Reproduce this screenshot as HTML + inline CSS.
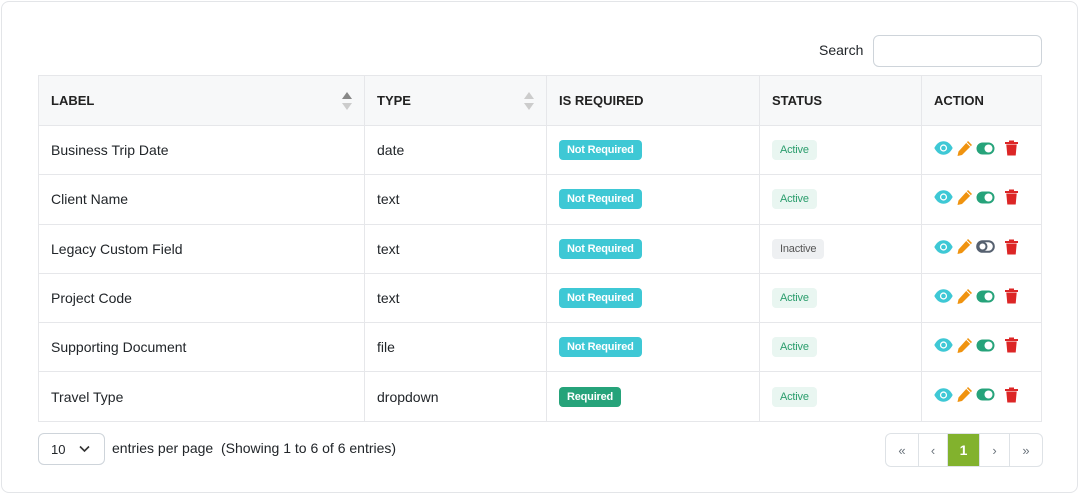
<!DOCTYPE html>
<html><head><style>
*{box-sizing:border-box;margin:0;padding:0}
body{width:1080px;height:495px;background:#fff;font-family:"Liberation Sans",sans-serif;color:#212529;position:relative;overflow:hidden}
.card{position:absolute;left:1px;top:1px;width:1077px;height:492px;border:1px solid #e3e5e8;border-radius:8px}
.search{position:absolute;left:819px;top:42px;font-size:14px}
.sinput{position:absolute;left:873px;top:35px;width:169px;height:32px;border:1px solid #ced4da;border-radius:6px}
table{position:absolute;left:38px;top:75px;border-collapse:collapse;width:1004px;font-size:14px}
td,th{border:1px solid #e6e7ea;padding:0 12px;text-align:left;vertical-align:middle}
th{height:50px;background:#f7f8f9;font-size:13px;font-weight:bold;color:#222;position:relative}
td{height:49.3px}
.sort{position:absolute;right:14px;top:16px;width:8px;height:18px}
.sort:before,.sort:after{content:"";position:absolute;left:0;border-left:5px solid transparent;border-right:5px solid transparent}
.sort:before{top:0;border-bottom:7px solid #ccc}
.sort:after{bottom:0;border-top:7px solid #ccc}
.sort.a:before{border-bottom-color:#888}
.b{display:inline-block;font-size:11px;font-weight:bold;padding:3px 8px;border-radius:4px;line-height:14px;letter-spacing:-0.2px}
.nr{background:#3ec8d5;color:#fff}
.rq{background:#26a37a;color:#fff}
.ac{background:#e9f6f1;color:#2a9d6c;font-weight:normal}
.in{background:#eef0f2;color:#555;font-weight:normal}
.ic{display:inline-flex;align-items:center;gap:3px;margin-top:-4px}
.pg{position:absolute;left:885px;top:433px;height:34px;display:flex;border:1px solid #dee2e6;border-radius:6px;overflow:hidden;font-size:13px;color:#6c757d}
.pg div{display:flex;align-items:center;justify-content:center;border-right:1px solid #dee2e6}
.pg div:last-child{border-right:none}
</style></head><body>
<div class="card"></div>
<div class="search">Search</div><div class="sinput"></div>
<table>
<tr><th style="width:326px">LABEL<span class="sort a"></span></th><th style="width:182px">TYPE<span class="sort"></span></th><th style="width:213px">IS REQUIRED</th><th style="width:162px">STATUS</th><th>ACTION</th></tr>
<tr><td>Business Trip Date</td><td>date</td><td><span class="b nr">Not Required</span></td><td><span class="b ac">Active</span></td><td><span class="ic">I1</span></td></tr>
<tr><td>Client Name</td><td>text</td><td><span class="b nr">Not Required</span></td><td><span class="b ac">Active</span></td><td><span class="ic">I1</span></td></tr>
<tr><td>Legacy Custom Field</td><td>text</td><td><span class="b nr">Not Required</span></td><td><span class="b in">Inactive</span></td><td><span class="ic">I0</span></td></tr>
<tr><td>Project Code</td><td>text</td><td><span class="b nr">Not Required</span></td><td><span class="b ac">Active</span></td><td><span class="ic">I1</span></td></tr>
<tr><td>Supporting Document</td><td>file</td><td><span class="b nr">Not Required</span></td><td><span class="b ac">Active</span></td><td><span class="ic">I1</span></td></tr>
<tr><td>Travel Type</td><td>dropdown</td><td><span class="b rq">Required</span></td><td><span class="b ac">Active</span></td><td><span class="ic">I1</span></td></tr>
</table>
<div style="position:absolute;left:38px;top:433px;width:67px;height:32px;border:1px solid #ced4da;border-radius:6px;font-size:13px;padding:8px 0 0 12px">10
<svg style="position:absolute;left:40px;top:11px" width="11" height="8" viewBox="0 0 11 8"><path d="M1 1.5l4.5 4.5 4.5-4.5" fill="none" stroke="#333" stroke-width="1.6"/></svg></div>
<div style="position:absolute;left:112px;top:440px;font-size:14px">entries per page&nbsp;&nbsp;(Showing 1 to 6 of 6 entries)</div>
<div class="pg"><div style="width:33px">«</div><div style="width:29px">‹</div><div style="width:32px;background:#82b22d;color:#fff;font-weight:bold;font-size:14px">1</div><div style="width:30px">›</div><div style="width:32px">»</div></div>
<script>
const eye='<svg width="19" height="14" viewBox="0 0 19 14"><path d="M0.3 7C3 2 6 0.3 9.5 0.3S16 2 18.7 7C16 12 13 13.7 9.5 13.7S3 12 0.3 7Z" fill="#3ec8d5"/><circle cx="9.5" cy="7" r="3.6" fill="#fff"/><circle cx="9.5" cy="7" r="2.3" fill="#3ec8d5"/></svg>';
const pen='<svg width="17" height="17" viewBox="0 0 17 17"><path d="M12 1l4 4-10 10-4.5 1 1-4.5z" fill="#f0930f"/><path d="M10.5 2.5l4 4" stroke="#fff" stroke-width="1"/></svg>';
const t1='<svg width="19" height="13" viewBox="0 0 19 13"><rect x="0.5" y="0.5" width="18" height="12" rx="6" fill="#26a37a"/><circle cx="12.5" cy="6.5" r="4" fill="#fff"/></svg>';
const t0='<svg width="19" height="13" viewBox="0 0 19 13"><rect x="1.2" y="1.2" width="16.6" height="10.6" rx="5.3" fill="none" stroke="#566170" stroke-width="2"/><circle cx="6.5" cy="6.5" r="4" fill="none" stroke="#566170" stroke-width="2"/></svg>';
const tr='<svg width="15" height="16" viewBox="0 0 15 16"><path d="M1 2h13v2H1z M5 0.5h5v2H5z" fill="#dc2626"/><path d="M2.3 4.5h10.4l-1 11h-8.4z" fill="#dc2626"/></svg>';
document.querySelectorAll('.ic').forEach(e=>{e.innerHTML=eye+pen+(e.textContent=='I1'?t1:t0)+'<span style="width:3px"></span>'+tr;});
</script>
</body></html>
